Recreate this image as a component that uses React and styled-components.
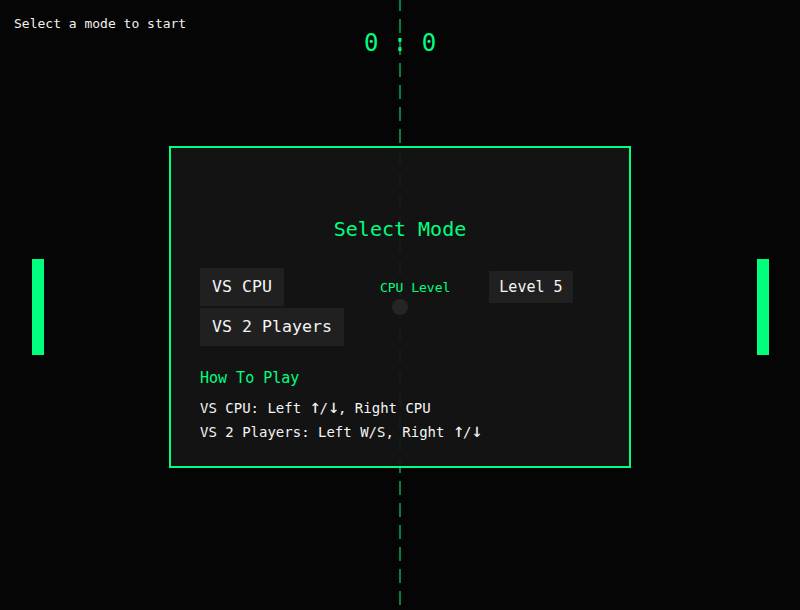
import React, { useState } from "react";
import styled, { createGlobalStyle } from "styled-components";

const GREEN = "#00ff7f";
const FIELD_W = 800;
const FIELD_H = 614;

const GlobalStyle = createGlobalStyle`
  html, body {
    margin: 0;
    padding: 0;
    background: #050505;
    overflow: hidden;
  }
  * {
    box-sizing: border-box;
  }
`;

const Stage = styled.div`
  position: relative;
  width: ${FIELD_W}px;
  height: ${FIELD_H}px;
  background: #050505;
  font-family: "DejaVu Sans Mono", "Liberation Mono", monospace;
  color: #f2f2f2;
`;

const Field = styled.svg`
  position: absolute;
  inset: 0;
  display: block;
`;

const Status = styled.div`
  position: absolute;
  top: 15px;
  left: 14px;
  font-size: 13px;
  line-height: 18px;
  color: #f0f0f0;
`;

const Score = styled.div`
  position: absolute;
  top: 28px;
  left: 0;
  right: 0;
  text-align: center;
  font-size: 24px;
  line-height: 30px;
  color: ${GREEN};
  white-space: pre;
`;

const Overlay = styled.div`
  position: absolute;
  inset: 0;
  display: flex;
  align-items: center;
  justify-content: center;
`;

const Panel = styled.div`
  width: 462px;
  height: 322px;
  border: 2px solid ${GREEN};
  background: rgba(20, 20, 20, 0.93);
  padding: 69px 29px 22px;
  display: flex;
  flex-direction: column;
`;

const Title = styled.h2`
  margin: 0;
  text-align: center;
  font-size: 20px;
  line-height: 24px;
  font-weight: normal;
  color: ${GREEN};
`;

const ModeRow = styled.div`
  display: flex;
  align-items: flex-start;
  margin-top: 27px;
`;

const ModeList = styled.div`
  display: flex;
  flex-direction: column;
  align-items: flex-start;
  gap: 2px;
`;

const ModeButton = styled.button`
  font-family: inherit;
  font-size: 16.6px;
  line-height: 22px;
  height: 38px;
  padding: 8px 12px;
  border: none;
  background: ${(p) => (p.active ? "#2a2a2a" : "#202020")};
  color: #f4f4f4;
  cursor: pointer;
`;

const LevelGroup = styled.div`
  display: flex;
  align-items: center;
  gap: 39px;
  height: 38px;
  margin-left: 36px;
`;

const LevelLabel = styled.span`
  font-size: 13px;
  color: ${GREEN};
`;

const LevelBox = styled.div`
  height: 32px;
  padding: 0 10px;
  display: flex;
  align-items: center;
  font-size: 15px;
  background: #202020;
  color: #f4f4f4;
`;

const HelpTitle = styled.div`
  margin-top: 22px;
  font-size: 15px;
  line-height: 20px;
  color: ${GREEN};
`;

const HelpList = styled.div`
  margin-top: 8px;
  display: flex;
  flex-direction: column;
`;

const HelpLine = styled.div`
  font-size: 14px;
  line-height: 24px;
  color: #f4f4f4;
  white-space: pre;
`;

const Arrow = styled.span`
  display: inline-block;
  width: 10px;
  text-align: center;
  font-size: 19px;
  line-height: 0;
`;

function GameField() {
  const paddleH = 96;
  const cy = FIELD_H / 2;
  return (
    <Field width={FIELD_W} height={FIELD_H} viewBox={`0 0 ${FIELD_W} ${FIELD_H}`}>
      <line
        x1="400"
        y1="0"
        x2="400"
        y2={FIELD_H}
        stroke="rgba(0,255,127,0.5)"
        strokeWidth="2"
        strokeDasharray="14 8"
        strokeDashoffset="3"
      />
      <rect x="32" y={cy - paddleH / 2} width="12" height={paddleH} fill={GREEN} />
      <rect x="757" y={cy - paddleH / 2} width="12" height={paddleH} fill={GREEN} />
      <circle cx="400" cy={cy} r="8" fill="#ffffff" />
    </Field>
  );
}

const Keys = () => (
  <>
    <Arrow>↑</Arrow>/<Arrow>↓</Arrow>
  </>
);

export default function App() {
  const [mode, setMode] = useState(null);
  const [level] = useState(5);
  const [score] = useState([0, 0]);

  return (
    <>
      <GlobalStyle />
      <Stage>
        <GameField />
        <Status>Select a mode to start</Status>
        <Score>{`${score[0]} : ${score[1]}`}</Score>
        <Overlay>
          <Panel>
            <Title>Select Mode</Title>
            <ModeRow>
              <ModeList>
                <ModeButton active={mode === "cpu"} onClick={() => setMode("cpu")}>
                  VS CPU
                </ModeButton>
                <ModeButton active={mode === "pvp"} onClick={() => setMode("pvp")}>
                  VS 2 Players
                </ModeButton>
              </ModeList>
              <LevelGroup>
                <LevelLabel>CPU Level</LevelLabel>
                <LevelBox>Level {level}</LevelBox>
              </LevelGroup>
            </ModeRow>
            <HelpTitle>How To Play</HelpTitle>
            <HelpList>
              <HelpLine>
                VS CPU: Left <Keys />, Right CPU
              </HelpLine>
              <HelpLine>
                VS 2 Players: Left W/S, Right <Keys />
              </HelpLine>
            </HelpList>
          </Panel>
        </Overlay>
      </Stage>
    </>
  );
}
